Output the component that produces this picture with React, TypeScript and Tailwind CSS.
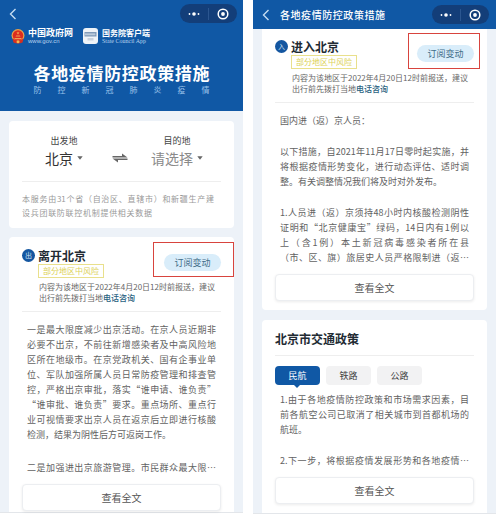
import type { ReactNode } from "react";

const TITLE = "各地疫情防控政策措施";

const LEAVE_TEXT = [
  [
    "一是最大限度减少出京活动。在京人员近期非",
    "必要不出京，不前往新增感染者及中高风险地",
    "区所在地级市。在京党政机关、国有企事业单",
    "位、军队加强所属人员日常防疫管理和排查管",
    "控，严格出京审批，落实“谁申请、谁负责”",
    "“谁审批、谁负责”要求。重点场所、重点行",
    "业可视情要求出京人员在返京后立即进行核酸",
    "检测，结果为阴性后方可返岗工作。",
  ],
  ["二是加强进出京旅游管理。市民群众最大限…"],
];

const ENTER_TEXT = [
  ["国内进（返）京人员："],
  [
    "以下措施，自2021年11月17日零时起实施，并",
    "将根据疫情形势变化，进行动态评估、适时调",
    "整。有关调整情况我们将及时对外发布。",
  ],
  [
    "1.人员进（返）京须持48小时内核酸检测阴性",
    "证明和“北京健康宝”绿码，14日内有1例以",
    "上（含1例）本土新冠病毒感染者所在县",
    "（市、区、旗）旅居史人员严格限制进（返…",
  ],
];

const TRAFFIC_TEXT = [
  [
    "1.由于各地疫情防控政策和市场需求因素，目",
    "前各航空公司已取消了相关城市到首都机场的",
    "航班。",
  ],
  ["2.下一步，将根据疫情发展形势和各地疫情…"],
];

function BackButton() {
  return (
    <button type="button" aria-label="返回" className="flex h-4 w-3 items-center justify-center">
      <svg viewBox="0 0 8 12" className="h-3 w-2" fill="none" stroke="#c4dcf2" strokeWidth="1.4">
        <path d="M6.5 1 L1.5 6 L6.5 11" />
      </svg>
    </button>
  );
}

function Capsule() {
  return (
    <div className="flex h-[19px] w-[57px] items-center rounded-full bg-[#133e79]">
      <button type="button" aria-label="更多" className="flex h-full flex-1 items-center justify-center">
        <svg viewBox="0 0 12 4" className="h-1 w-3" fill="#fff">
          <circle cx="1.5" cy="2" r="0.9" />
          <circle cx="6" cy="2" r="1.8" />
          <circle cx="10.5" cy="2" r="0.9" />
        </svg>
      </button>
      <span className="h-3 w-px bg-[#2b5690]" />
      <button type="button" aria-label="关闭" className="flex h-full flex-1 items-center justify-center">
        <svg viewBox="0 0 12 12" className="size-3">
          <circle cx="6" cy="6" r="4.8" fill="none" stroke="#fff" strokeWidth="1.5" />
          <circle cx="6" cy="6" r="1.9" fill="#fff" />
        </svg>
      </button>
    </div>
  );
}

function Emblem() {
  return (
    <svg viewBox="0 0 28 30" className="h-[15px] w-[14px]">
      <circle cx="14" cy="13" r="13" fill="#e9a14a" />
      <circle cx="14" cy="13" r="10.500" fill="#dd2c1e" />
      <path d="M3 19 Q14 27 25 19 L23 27 Q14 31 5 27 Z" fill="#d8301f" />
      <path d="M7 18 H21 V20.500 H7 Z M9 15 H19 L17.500 13 H10.500 Z" fill="#f0a050" />
      <path d="M14 5 l.9 2 2.200 .2 -1.700 1.500 .5 2.100 -1.900 -1.100 -1.900 1.100 .5 -2.100 -1.700 -1.500 2.200 -.2 Z" fill="#f4a850" />
      <circle cx="14" cy="25.500" r="3" fill="#f2b84e" />
    </svg>
  );
}

function AppIcon() {
  return (
    <svg viewBox="0 0 30 32" className="h-4 w-[15px]">
      <rect width="30" height="32" rx="6" fill="#eef3f8" />
      <rect x="3" y="8" width="24" height="9" fill="#7f9ab8" />
      <path d="M6 10v5M10 10v5M14 10v5M18 10v5M22 10v5M4 12.500h21" stroke="#dfe8f1" strokeWidth="1.200" />
      <rect x="9" y="20" width="12" height="5" fill="#c9d3de" />
    </svg>
  );
}

function Caret() {
  return (
    <svg viewBox="0 0 6 4" className="h-1 w-[6px]" fill="#666">
      <path d="M0.300 0.300 H5.700 L3 3.700 Z" />
    </svg>
  );
}

function PlaceSelect({ id, label, value, tone }: { id: string; label: string; value: string; tone: string }) {
  return (
    <div className="flex flex-col items-center">
      <label htmlFor={id} className="text-[9px] leading-[14px] text-[#444]">
        {label}
      </label>
      <div className="mt-px flex items-center gap-1">
        <select
          id={id}
          defaultValue={value}
          className={`appearance-none bg-transparent p-0 text-[14px] leading-[18px] [field-sizing:content] ${tone}`}
        >
          <option value={value}>{value}</option>
        </select>
        <Caret />
      </div>
    </div>
  );
}

function Paragraphs({ items, gap }: { items: string[][]; gap: string }) {
  return (
    <div className={`flex flex-col px-[5px] text-[9px] leading-[15px] text-[#626262] ${gap}`}>
      {items.map((lines) => (
        <p key={lines[0]}>
          {lines.map((line, i) => (
            <span
              key={line}
              className={
                i < lines.length - 1 || line.endsWith("…")
                  ? "block text-justify [text-align-last:justify]"
                  : "block"
              }
            >
              {line}
            </span>
          ))}
        </p>
      ))}
    </div>
  );
}

function FullTextButton() {
  return (
    <button
      type="button"
      className="mt-[9px] h-[27px] w-full rounded-[4px] border border-[#eceef1] bg-white text-[10px] text-[#555] shadow-[0_1px_3px_rgba(0,0,0,0.08)]"
    >
      查看全文
    </button>
  );
}

function RegionHeader({ mark, name, frame }: { mark: string; name: string; frame: string }) {
  return (
    <header className="border-b border-[#eeeeee] pb-2">
      <div className="flex items-start justify-between">
        <div className="flex gap-[3px]">
          <span className="flex size-[13px] items-center justify-center rounded-full bg-[#1456a0] text-[7px] leading-none text-[#cfe2f5]">
            {mark}
          </span>
          <div>
            <h2 className="text-[12px] leading-[14px] font-bold text-[#222b33]">{name}</h2>
            <p className="mt-px h-[14px] border border-[#e9e08c] px-[4px] text-[8px] leading-[12px] text-[#ddd257]">
              部分地区中风险
            </p>
          </div>
        </div>
        <div className="relative mt-[5px]">
          <button type="button" className="block h-[17px] w-[57px] rounded-full bg-[#d9edfa] text-[9px] leading-[17px] text-[#3f6c88]">
            订阅变动
          </button>
          <span className={`pointer-events-none absolute border border-[#d8443e] ${frame}`} />
        </div>
      </div>
      <p className="mt-[3px] pl-[17px] text-[8px] leading-[11px] whitespace-nowrap text-[#666]">
        内容为该地区于2022年4月20日12时前报送，建议
        <br />
        出行前先拨打当地
        <a href="#consult" className="font-medium text-[#28627f]">
          电话咨询
        </a>
      </p>
    </header>
  );
}

function Card({ children, className }: { children: ReactNode; className: string }) {
  return <section className={`bg-white px-[13px] ${className}`}>{children}</section>;
}

function HomeScreen() {
  return (
    <div className="min-w-0 flex-1 border-b border-[#e3e6ea] bg-[#edf2f8]">
      <header className="bg-[#1058a5] pb-[15px] text-white">
        <div className="flex items-center justify-between pt-1 pr-[6px] pl-[7px]">
          <BackButton />
          <Capsule />
        </div>
        <div className="mt-[5px] flex items-center gap-[10px] pl-[11px]">
          <div className="flex items-center gap-[3px]">
            <Emblem />
            <div>
              <p className="text-[9px] leading-[10px] font-bold">中国政府网</p>
              <p className="font-['Liberation_Sans'] text-[6px] leading-[6px] text-[#b9d3ee]">www.gov.cn</p>
            </div>
          </div>
          <div className="flex items-center gap-1">
            <AppIcon />
            <div>
              <p className="text-[8px] leading-[10px] font-bold">国务院客户端</p>
              <p className="font-['Liberation_Serif'] text-[6px] leading-[6px] text-[#b9d3ee]">State Council App</p>
            </div>
          </div>
        </div>
        <div className="mx-auto mt-[18px] w-[176px]">
          <h1 className="text-[17px] leading-[22px] font-bold [text-align-last:justify]">{TITLE}</h1>
          <p className="text-[8px] leading-[12px] text-[#9cc3ea] [text-align-last:justify]">防控新冠肺炎疫情</p>
        </div>
      </header>

      <div className="flex flex-col gap-[9px] px-[9px] pt-[10px]">
        <Card className="rounded-[4px] pt-[13px] pb-2">
          <div className="flex items-center justify-between border-b border-[#eeeeee] pr-[18px] pb-[14px] pl-[23px]">
            <PlaceSelect id="from" label="出发地" value="北京" tone="text-[#333]" />
            <button type="button" aria-label="交换" className="mt-[14px] ml-[6px]">
              <svg viewBox="0 0 16 10" className="h-[10px] w-4" fill="#666">
                <path d="M0.500 3 H10 V0.500 L15.500 4.400 H0.500 Z" />
                <path d="M15.500 7 H6 V9.500 L0.500 5.600 H15.500 Z" />
              </svg>
            </button>
            <PlaceSelect id="to" label="目的地" value="请选择" tone="text-[#8a8a8a]" />
          </div>
          <p className="mt-[10px] text-[8px] leading-[14px] text-[#999]">
            <span className="block w-[192px] [text-align-last:justify]">
              本服务由31个省（自治区、直辖市）和新疆生产建
            </span>
            <span className="block w-[130px] [text-align-last:justify]">设兵团联防联控机制提供相关数据</span>
          </p>
        </Card>

        <Card className="rounded-t-[4px] pt-3 pb-px">
          <RegionHeader mark="出" name="离开北京" frame="-top-3 -right-[13px] -bottom-[6px] -left-[11px]" />
          <div className="mt-[10px]">
            <Paragraphs items={LEAVE_TEXT} gap="gap-[18px]" />
          </div>
          <FullTextButton />
        </Card>
      </div>
    </div>
  );
}

function DetailScreen() {
  return (
    <div className="min-w-0 flex-1 border-b border-[#e3e6ea] bg-[#edf2f8]">
      <header className="flex h-[29px] items-center bg-[#1058a5] pr-[7px] pl-[7px] text-white">
        <BackButton />
        <h1 className="ml-2 w-[105px] text-[10px] font-medium [text-align-last:justify]">{TITLE}</h1>
        <div className="ml-auto">
          <Capsule />
        </div>
      </header>

      <div className="flex flex-col gap-[10px] px-[9px]">
        <Card className="rounded-b-[4px] pt-[11px] pb-[9px]">
          <RegionHeader mark="入" name="进入北京" frame="-top-3 -right-[6px] -bottom-[7px] -left-[9px]" />
          <div className="mt-[10px]">
            <Paragraphs items={ENTER_TEXT} gap="gap-4" />
          </div>
          <FullTextButton />
        </Card>

        <Card className="rounded-t-[4px] pt-3 pb-[9px]">
          <h2 className="border-b border-[#eeeeee] pb-[9px] text-[12px] leading-[14px] font-bold text-[#222b33]">
            北京市交通政策
          </h2>
          <div role="tablist" className="mt-[10px] flex gap-[6px] text-[9px] leading-[19px] text-[#444]">
            <button type="button" role="tab" aria-selected="true" className="relative h-[19px] w-[45px] rounded-[4px] bg-[#1058a5] text-white">
              民航
              <svg viewBox="0 0 6 3" className="absolute top-full left-[19px] h-[3px] w-[6px]" fill="#1058a5">
                <path d="M0 0 H6 L3 3 Z" />
              </svg>
            </button>
            <button type="button" role="tab" aria-selected="false" className="h-[19px] w-[45px] rounded-[4px] bg-[#f2f2f3]">
              铁路
            </button>
            <button type="button" role="tab" aria-selected="false" className="h-[19px] w-[45px] rounded-[4px] bg-[#f2f2f3]">
              公路
            </button>
          </div>
          <div className="mt-[7px]">
            <Paragraphs items={TRAFFIC_TEXT} gap="gap-4" />
          </div>
          <FullTextButton />
        </Card>
      </div>
    </div>
  );
}

export default function App() {
  return (
    <main
      lang="zh-CN"
      className="flex items-start gap-[10px] bg-white pr-[3px] font-['Noto_Sans_CJK_SC',sans-serif]"
    >
      <HomeScreen />
      <DetailScreen />
    </main>
  );
}
